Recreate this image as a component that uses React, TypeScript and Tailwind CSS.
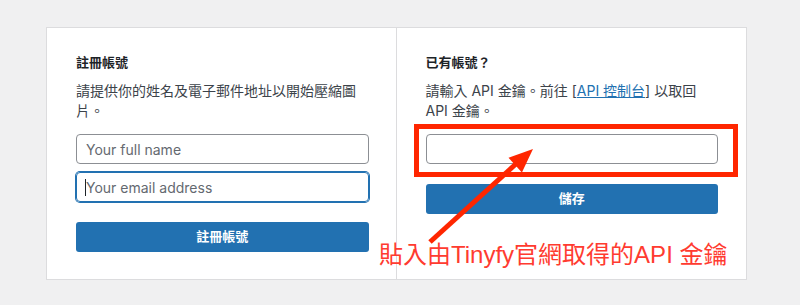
import React from "react";

const font = { fontFamily: 'Inter, "Noto Sans CJK TC", sans-serif' };

export default function App() {
  return (
    <div className="relative w-[800px] h-[305px] bg-[#f0f0f1] overflow-hidden" style={font}>
      <div className="pt-[27px] pl-[46px]">
        <div className="w-[701px] h-[253px] bg-white border border-[#dcdcde] grid grid-cols-2">
          {/* Left column */}
          <div className="pl-[29px] pr-[27px] pt-[24px] border-r border-[#dcdcde]">
            <h3 className="text-[13px] leading-[20px] font-semibold text-[#1d2327]">註冊帳號</h3>
            <p className="mt-[9px] text-[14px] leading-[20px] text-[#3c434a]">
              請提供你的姓名及電子郵件地址以開始壓縮圖片。
            </p>
            <input
              className="mt-[13px] block w-full h-[30px] rounded-[4px] border border-[#8c8f94] px-[9px] text-[14px] placeholder:text-[#646970] outline-none"
              placeholder="Your full name"
            />
            <div className="relative mt-[8px]">
              <input
                className="block w-full h-[30px] rounded-[4px] border border-[#2271b1] ring-1 ring-[#2271b1] px-[9px] text-[14px] placeholder:text-[#646970] outline-none"
                placeholder="Your email address"
              />
              <span className="absolute left-[9px] top-[7px] w-px h-[17px] bg-[#1d2327]" />
            </div>
            <button className="mt-[20px] block w-full h-[30px] rounded-[3px] bg-[#2271b1] text-white text-[13px] font-semibold">
              註冊帳號
            </button>
          </div>
          {/* Right column */}
          <div className="pl-[29px] pr-[28px] pt-[24px]">
            <h3 className="text-[13px] leading-[20px] font-semibold text-[#1d2327]">已有帳號？</h3>
            <p className="mt-[9px] text-[14px] leading-[20px] text-[#3c434a]">
              請輸入 API 金鑰。前往 [<span className="text-[#2271b1] underline">API 控制台</span>] 以取回 API 金鑰。
            </p>
            <input className="mt-[13px] block w-full h-[30px] rounded-[4px] border border-[#8c8f94] px-[9px] text-[14px] outline-none" />
            <button className="mt-[20px] block w-full h-[30px] rounded-[3px] bg-[#2271b1] text-white text-[13px] font-semibold">
              儲存
            </button>
          </div>
        </div>
      </div>

      {/* Annotation overlay */}
      <div className="absolute left-[414px] top-[124px] w-[324px] h-[53px] border-[5px] border-[#ff2600]" />
      <svg className="absolute left-0 top-0" width="800" height="305" viewBox="0 0 800 305">
        <line x1="430" y1="242" x2="517" y2="163" stroke="#ff2600" strokeWidth="5" />
        <polygon points="533,149 521.9,172.5 508.5,157.7" fill="#ff2600" />
      </svg>
      <div
        className="absolute left-[379px] top-[239px] text-[24px] leading-[32px] text-[#ff3b30] whitespace-nowrap"
        style={{ fontFamily: '"Liberation Sans", "Noto Sans CJK TC", sans-serif' }}
      >
        貼入由Tinyfy官網取得的API 金鑰
      </div>
    </div>
  );
}
